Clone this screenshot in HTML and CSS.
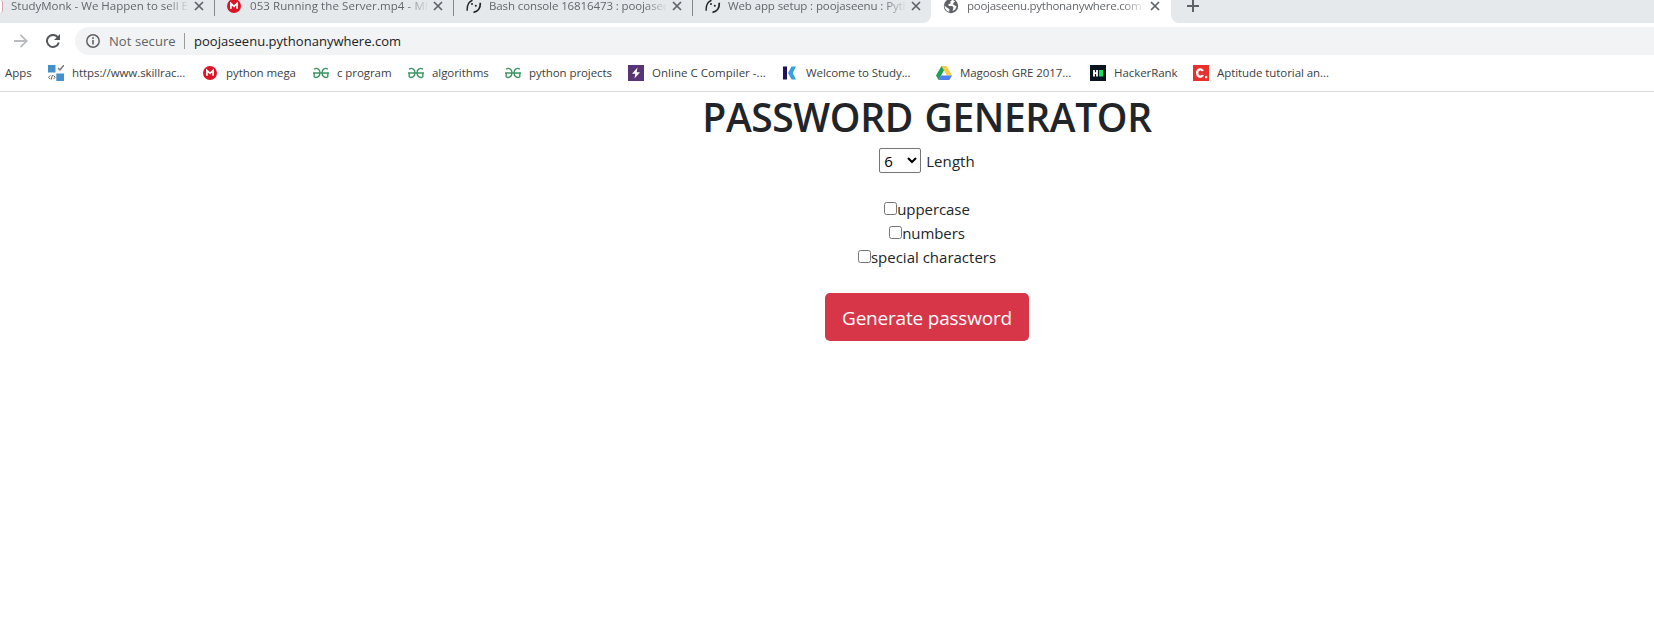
FILE: index.html
```html
<!DOCTYPE html>
<html lang="en">
<head>
<meta charset="utf-8">
<title>Password Generator</title>
<link rel="stylesheet" href="styles.css">
</head>
<body>
<svg class="defs" aria-hidden="true">
  <symbol id="close" viewBox="0 0 10 10"><path d="M1 1l8 8M9 1L1 9" fill="none" stroke="#5f6368" stroke-width="1.7"/></symbol>
  <symbol id="mega" viewBox="0 0 14 14"><circle cx="7" cy="7" r="7" fill="#dd1426"/><path d="M3.9 9.8V4.4L7 7.4l3.1-3v5.4" fill="none" stroke="#fff" stroke-width="1.7"/></symbol>
  <symbol id="snake" viewBox="0 0 16 16"><path d="M6.500 2.300C3 3.500.8 7 1.200 12.800" fill="none" stroke="#222" stroke-width="1.400"/><path d="M7.500 14.300c4.500-.5 7-4.300 6.800-9.500" fill="none" stroke="#222" stroke-width="1.700"/><circle cx="6" cy="6" r="1" fill="#222"/><circle cx="9.800" cy="7.800" r="1" fill="#222"/></symbol>
  <symbol id="gfg" viewBox="0 0 16 12"><path d="M1 2.300C3.500.4 7 1.700 7 5.700S3.500 11.700 1.200 9.700V6M15 2.300C12.500.4 9 1.700 9 5.700s3.500 6 5.800 4V6M0 6h16" fill="none" stroke="#3c9663" stroke-width="1.400"/></symbol>
</svg>

<header class="browser">
  <div class="tabs">
    <div class="tab first"><i class="edge-dot"></i><span class="label t1">StudyMonk - We Happen to sell Ex</span><svg class="x"><use href="#close"/></svg></div>
    <div class="tab"><svg class="fav mega"><use href="#mega"/></svg><span class="label t2">053 Running the Server.mp4 - ME</span><svg class="x"><use href="#close"/></svg></div>
    <div class="tab"><svg class="fav"><use href="#snake"/></svg><span class="label t3">Bash console 16816473 : poojasee</span><svg class="x"><use href="#close"/></svg></div>
    <div class="tab last"><svg class="fav"><use href="#snake"/></svg><span class="label t3">Web app setup : poojaseenu : Pyth</span><svg class="x"><use href="#close"/></svg></div>
    <div class="tab active"><svg class="fav globe" viewBox="0 0 16 16"><circle cx="8" cy="8" r="7.200" fill="#5f6368"/><path d="M9.500 1.800L7.500 3.200v2L5.200 6.400l.6 1.500h3.400l1.300 1.600-1 3.400 2.600-1.500 1.500-2.800-1.800-1-2-1.400 1.200-2 1.200-.7zM1.500 7.500l3.200 2.800 1.600.6v2.900L4 12.900 2 10.300z" fill="#fff"/></svg><span class="label t4">poojaseenu.pythonanywhere.com</span><svg class="x"><use href="#close"/></svg></div>
    <div class="newtab"><svg class="plus" viewBox="0 0 12 12"><path d="M6 0v12M0 6h12" stroke="#5f6368" stroke-width="2"/></svg></div>
  </div>
  <div class="toolbar">
    <svg class="forward" viewBox="0 0 14 14"><path d="M0 7h12.500M6.500.8L12.700 7l-6.200 6.200" fill="none" stroke="#b9bbbe" stroke-width="1.800"/></svg>
    <svg class="reload" viewBox="0 0 14 14"><path d="M11.700 3.200A6 6 0 1 0 12.800 8.500" fill="none" stroke="#54585d" stroke-width="2"/><path d="M14 0v6H8z" fill="#54585d"/></svg>
    <div class="address">
      <svg class="info" viewBox="0 0 14 14"><circle cx="7" cy="7" r="6.200" fill="none" stroke="#5f6368" stroke-width="1.500"/><path d="M7 6v4.500M7 3.300v1.600" stroke="#5f6368" stroke-width="1.600"/></svg>
      <span class="insecure">Not secure</span>
      <span class="url">poojaseenu.pythonanywhere.com</span>
    </div>
  </div>
  <nav class="bookmarks">
    <span>Apps</span>
    <span><svg viewBox="0 0 16 16"><path d="M0 0h7.500v7.500H0zM8.300 8.500H16V16H8.300z" fill="#4390ca"/><path d="M10 3l2 2 4-5" fill="none" stroke="#777" stroke-width="1.500"/><path d="M2.200 10.500L.5 12.300l1.700 1.800M5.500 10.500l1.700 1.800-1.700 1.800M4.500 10l-1.300 4.600" fill="none" stroke="#666" stroke-width="1"/></svg>https://www.skillrac...</span>
    <span><svg class="small"><use href="#mega"/></svg>python mega</span>
    <span><svg><use href="#gfg"/></svg>c program</span>
    <span><svg><use href="#gfg"/></svg>algorithms</span>
    <span><svg><use href="#gfg"/></svg>python projects</span>
    <span class="tight"><svg viewBox="0 0 16 16"><path d="M0 0h16v16H0z" fill="#583577"/><path d="M9.500 2.500L4 8.700h3.300L6.500 13.500 12 7.300H8.700z" fill="#fff"/></svg>Online C Compiler -...</span>
    <span><svg viewBox="0 0 16 16"><path d="M1 1.500h4v13H1z" fill="#21115d"/><path d="M9.500 1.500H14L10.800 8l3.200 6.500H9.500L6 8z" fill="#35a2dc"/></svg>Welcome to Study...</span>
    <span><svg viewBox="0 0 16 16"><path d="M5.500 1h5L16 10.500h-5z" fill="#fbcb43"/><path d="M5.500 1L8 5.300 2.600 15 0 10.500z" fill="#1c9f57"/><path d="M5 10.500h11L13.400 15H2.600z" fill="#4f7ff0"/></svg>Magoosh GRE 2017...</span>
    <span><svg viewBox="0 0 16 16"><path d="M0 0h16v16H0z" fill="#0b1320"/><path d="M4 5v6.500M7 5v6.500M4 8.200h3" fill="none" stroke="#fff" stroke-width="1.800"/><path d="M9 5h4v6.500H9z" fill="#12e55a"/></svg>HackerRank</span>
    <span><svg viewBox="0 0 16 16"><path d="M0 0h16v16H0z" fill="#e8302c"/><path d="M9.600 6.200C9.300 3.500 4.200 3.400 4.200 8s5.100 4.500 5.400 1.800" fill="none" stroke="#fff" stroke-width="2.300"/><path d="M12 11h2.200v2.200H12z" fill="#fff"/></svg>Aptitude tutorial an...</span>
  </nav>
</header>

<main class="page">
  <h1>PASSWORD GENERATOR</h1>
  <form class="form">
    <label class="length"><select><option>6</option></select>Length</label>
    <div class="options">
      <label class="upper"><input type="checkbox">uppercase</label>
      <label class="nums"><input type="checkbox">numbers</label>
      <label><input type="checkbox">special characters</label>
    </div>
    <button type="button">Generate password</button>
  </form>
</main>
</body>
</html>
```
FILE: styles.css
```css
* { box-sizing: border-box; }
body {
  margin: 0;
  background: #fff;
  color: #212529;
  font-family: "Open Sans", "Noto Sans", sans-serif;
  overflow: hidden;
}
svg { display: block; flex: none; }
.defs { display: none; }

/* Tab strip */
.tabs {
  display: flex;
  height: 23px;
  overflow: hidden;
  background: linear-gradient(90deg, #e5e9ec 923px, #fff 923px, #fff 1180px, #e5e9ec 1180px);
  font-size: 11.5px;
  line-height: 12px;
  color: #64676b;
}
.tab {
  display: flex;
  align-items: flex-start;
  width: 239px;
  height: 16px;
  padding-left: 12px;
  border-right: 1px solid #85888c;
}
.tab.first { width: 215px; padding-left: 0; }
.tab.last { width: 238px; height: 23px; border-right: 0; border-bottom-right-radius: 8px; background: #e5e9ec; }
.tab.active { width: 240px; height: 23px; padding-left: 13px; border: 0; }
.newtab {
  flex: 1;
  height: 23px;
  padding-left: 16px;
  background: #e5e9ec;
  border-bottom-left-radius: 8px;
}
.edge-dot {
  width: 3px;
  height: 13px;
  border-right: 1px solid #dba0ad;
  border-radius: 0 7px 7px 0;
  background: #fff;
  margin-right: 8px;
}
.fav { width: 16px; height: 16px; margin: -2px 7px 0 0; }
.fav.mega { width: 14px; height: 14px; margin: -1px 9px 0 0; }
.fav.globe { margin: -2px 8px 0 -1px; }
.label {
  width: 177px;
  height: 20px;
  overflow: hidden;
  white-space: nowrap;
  -webkit-mask-image: linear-gradient(90deg, #000 155px, transparent 179px);
  mask-image: linear-gradient(90deg, #000 155px, transparent 179px);
}
.t1 { letter-spacing: 0; }
.t2 { letter-spacing: 0.08px; }
.t3 { letter-spacing: -0.11px; }
.t4 { letter-spacing: -0.28px; }
.x { width: 10px; height: 10px; margin: 1px 0 0 6px; }
.plus { width: 12px; height: 12px; }

/* Toolbar */
.toolbar {
  display: flex;
  align-items: center;
  height: 36px;
  padding-left: 14px;
}
.forward { width: 14px; height: 14px; margin-right: 18px; }
.reload { width: 14px; height: 14px; margin-right: 15px; }
.address {
  display: flex;
  flex: 1;
  align-items: center;
  height: 28px;
  padding-left: 11px;
  border-radius: 14px 0 0 14px;
  background: #f1f3f4;
  font-size: 13px;
}
.info { width: 14px; height: 14px; margin-right: 9px; }
.insecure {
  width: 76px;
  border-right: 1px solid #999c9f;
  line-height: 16px;
  letter-spacing: 0.08px;
  color: #5f6368;
}
.url { margin-left: 9px; letter-spacing: 0.03px; color: #202124; }

/* Bookmarks */
.bookmarks {
  display: grid;
  grid-template-columns: 43px 154px 111px 95px 97px 123px 154px 154px 154px 103px 1fr;
  align-items: center;
  height: 33px;
  padding: 0 0 4px 5px;
  border-bottom: 1px solid #d9dadc;
  font-size: 11.5px;
  letter-spacing: -0.07px;
  line-height: 16px;
  color: #3c4043;
}
.bookmarks span { display: flex; align-items: center; white-space: nowrap; }
.bookmarks svg { width: 16px; height: 16px; margin-right: 8px; }
.bookmarks svg.small { width: 14px; height: 14px; margin: 0 9px 0 1px; }
.bookmarks .tight { letter-spacing: 0.03px; }

/* Page */
.page { padding-left: 200px; text-align: center; }
h1 {
  margin: 0 0 7px;
  padding-top: 1px;
  font-size: 39px;
  font-weight: 560;
  line-height: 48px;
  letter-spacing: -0.4px;
  word-spacing: 2px;
}
.form { display: flex; flex-direction: column; align-items: center; }
.form label { display: flex; align-items: center; height: 24px; font-size: 15px; }
.form .length { height: 25px; gap: 5px; padding-top: 1px; letter-spacing: 0.1px; }
.form .upper { letter-spacing: -0.08px; }
.form .nums { letter-spacing: -0.1px; }
select {
  width: 42px;
  height: 25px;
  margin-top: -1px;
  padding: 0;
  border: 1px solid #767676;
  border-radius: 2px;
  background-color: #fff;
  color: #000;
  font: 15px "Open Sans", sans-serif;
}
.options {
  display: flex;
  flex-direction: column;
  align-items: center;
  margin: 24px 0;
}
input { width: 13px; height: 13px; margin: 0 0 2px; }
button {
  width: 204px;
  height: 48px;
  padding: 1px 0 0;
  border: 0;
  border-radius: 5px;
  background: #d73648;
  color: #fff;
  font: 19px/30px "Open Sans", sans-serif;
  letter-spacing: -0.2px;
}
```
